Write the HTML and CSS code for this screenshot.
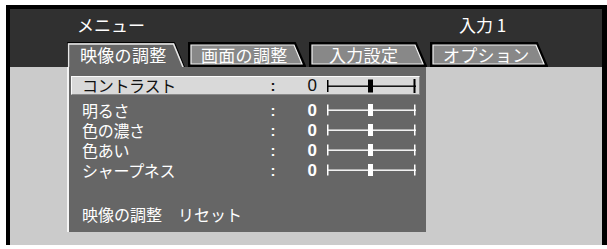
FILE: index.html
```html
<!DOCTYPE html>
<html lang="ja">
<head>
<meta charset="utf-8">
<link rel="stylesheet" href="styles.css">
</head>
<body>
<div class="screen">
  <header class="head">
    <div class="titlebar">
      <span class="title">メニュー</span>
      <span class="source">入力 1</span>
    </div>
    <nav class="tabs">
      <div class="tab active">
        <svg class="tab-shape" width="118" height="25" viewBox="0 0 118 25">
          <polygon points="0,25 0,1 107,1 117,25" fill="#666"/>
          <polyline points="0.5,25 0.5,0.5 107.5,0.5 117.5,25" fill="none" stroke="#000" stroke-width="1"/>
          <polyline points="1.5,25 1.5,2 106.5,2 116,25" fill="none" stroke="#e8e8e8" stroke-width="1.5"/>
        </svg>
        <span class="tab-label">映像の調整</span>
      </div>
      <div class="tab">
        <svg class="tab-shape" width="118" height="25" viewBox="0 0 118 25">
          <polygon points="1,24 1,1 107,1 117,24" fill="#000" stroke="#000" stroke-width="2"/>
          <polygon points="3,22 3,3 106,3 114,22" fill="#888" stroke="#f2f2f2" stroke-width="1.2"/>
        </svg>
        <span class="tab-label">画面の調整</span>
      </div>
      <div class="tab">
        <svg class="tab-shape" width="118" height="25" viewBox="0 0 118 25">
          <polygon points="1,24 1,1 107,1 117,24" fill="#000" stroke="#000" stroke-width="2"/>
          <polygon points="3,22 3,3 106,3 114,22" fill="#888" stroke="#f2f2f2" stroke-width="1.2"/>
        </svg>
        <span class="tab-label centered">入力設定</span>
      </div>
      <div class="tab">
        <svg class="tab-shape" width="118" height="25" viewBox="0 0 118 25">
          <polygon points="1,24 1,1 107,1 117,24" fill="#000" stroke="#000" stroke-width="2"/>
          <polygon points="3,22 3,3 106,3 114,22" fill="#888" stroke="#f2f2f2" stroke-width="1.2"/>
        </svg>
        <span class="tab-label">オプション</span>
      </div>
    </nav>
  </header>
  <main class="body">
    <section class="panel">
      <div class="row selected">
        <span class="label">コントラスト</span>
        <span class="colon">:</span>
        <span class="value">0</span>
        <svg class="slider" width="89" height="14" viewBox="0 0 89 14">
          <rect x="0" y="1" width="1.5" height="12" fill="#000"/>
          <rect x="0" y="6.5" width="89" height="1.4" fill="#000"/>
          <rect x="86.5" y="0" width="2" height="14" fill="#000"/>
          <rect x="41" y="0.5" width="5" height="13" fill="#000"/>
        </svg>
      </div>
      <div class="row">
        <span class="label">明るさ</span>
        <span class="colon">:</span>
        <span class="value">0</span>
        <svg class="slider" width="89" height="14" viewBox="0 0 89 14">
          <rect x="0" y="1.5" width="1.5" height="11" fill="#fff"/>
          <rect x="0" y="6.5" width="89" height="1.4" fill="#fff"/>
          <rect x="87" y="1.5" width="1.5" height="11" fill="#fff"/>
          <rect x="41" y="1" width="5" height="12" fill="#fff"/>
        </svg>
      </div>
      <div class="row">
        <span class="label">色の濃さ</span>
        <span class="colon">:</span>
        <span class="value">0</span>
        <svg class="slider" width="89" height="14" viewBox="0 0 89 14">
          <rect x="0" y="1.5" width="1.5" height="11" fill="#fff"/>
          <rect x="0" y="6.5" width="89" height="1.4" fill="#fff"/>
          <rect x="87" y="1.5" width="1.5" height="11" fill="#fff"/>
          <rect x="41" y="1" width="5" height="12" fill="#fff"/>
        </svg>
      </div>
      <div class="row">
        <span class="label">色あい</span>
        <span class="colon">:</span>
        <span class="value">0</span>
        <svg class="slider" width="89" height="14" viewBox="0 0 89 14">
          <rect x="0" y="1.5" width="1.5" height="11" fill="#fff"/>
          <rect x="0" y="6.5" width="89" height="1.4" fill="#fff"/>
          <rect x="87" y="1.5" width="1.5" height="11" fill="#fff"/>
          <rect x="41" y="1" width="5" height="12" fill="#fff"/>
        </svg>
      </div>
      <div class="row">
        <span class="label">シャープネス</span>
        <span class="colon">:</span>
        <span class="value">0</span>
        <svg class="slider" width="89" height="14" viewBox="0 0 89 14">
          <rect x="0" y="1.5" width="1.5" height="11" fill="#fff"/>
          <rect x="0" y="6.5" width="89" height="1.4" fill="#fff"/>
          <rect x="87" y="1.5" width="1.5" height="11" fill="#fff"/>
          <rect x="41" y="1" width="5" height="12" fill="#fff"/>
        </svg>
      </div>
      <div class="reset">映像の調整　リセット</div>
    </section>
  </main>
</div>
</body>
</html>
```
FILE: styles.css
```css
html, body {
  margin: 0;
  padding: 0;
  background: #fff;
}

body {
  font-family: "Noto Sans CJK JP", "Noto Sans", sans-serif;
  color: #fff;
}

.screen {
  margin: 5px 0 0 6px;
  width: 592px;
  border-top: 4px solid #000;
  border-left: 4px solid #000;
  border-right: 5px solid #000;
  display: flex;
  flex-direction: column;
}

.head {
  background: #303030;
  height: 58px;
  display: flex;
  flex-direction: column;
}

.titlebar {
  height: 30px;
  display: flex;
  align-items: center;
  padding-left: 67px;
  font-size: 17px;
  line-height: 20px;
  padding-top: 1px;
  box-sizing: border-box;
}

.title {
  width: 382px;
}

.tabs {
  margin-top: 3px;
  padding-left: 57px;
  display: flex;
  gap: 3px;
  height: 25px;
}

.tab {
  position: relative;
  width: 118px;
  height: 25px;
}

.tab-shape {
  position: absolute;
  left: 0;
  top: 0;
  display: block;
}

.tab-label {
  position: relative;
  display: block;
  padding-left: 13px;
  font-size: 17px;
  line-height: 25px;
  color: #fff;
  letter-spacing: 0.3px;
}

.tab-label.centered {
  padding-left: 20px;
}

.body {
  background: #cbcbcb;
  height: 178px;
  padding-left: 57px;
}

.panel {
  width: 359px;
  height: 165px;
  background: #666;
  border-left: 2px solid #f4f4f4;
  padding-top: 9px;
  box-sizing: border-box;
  display: flex;
  flex-direction: column;
}

.row {
  display: grid;
  grid-template-columns: 186px 10px 39px 99px;
  align-items: center;
  height: 20px;
  margin-left: 2px;
  margin-right: 6px;
  padding-left: 10px;
  border: 1px solid transparent;
  box-sizing: border-box;
  font-size: 16px;
  line-height: 17px;
}

.row.selected {
  height: 19px;
  background: #d9d9d9;
  color: #111;
  border-color: #fbfbfb #8a8a8a #8a8a8a #fbfbfb;
  margin-bottom: 5px;
}

.label,
.colon,
.value {
  display: block;
  height: 17px;
  overflow: visible;
  white-space: nowrap;
}

.label {
  letter-spacing: -0.3px;
}

.colon {
  font-family: "Liberation Sans", sans-serif;
  font-weight: bold;
  font-size: 15px;
  text-align: center;
}

.value {
  font-family: "Liberation Sans", sans-serif;
  font-weight: bold;
  font-size: 17px;
  text-align: right;
}

.row.selected .value {
  font-weight: normal;
}

.slider {
  display: block;
  margin-left: 10px;
}

.reset {
  margin-top: 24px;
  padding-left: 13px;
  font-size: 16px;
  line-height: 20px;
  white-space: nowrap;
}
```
